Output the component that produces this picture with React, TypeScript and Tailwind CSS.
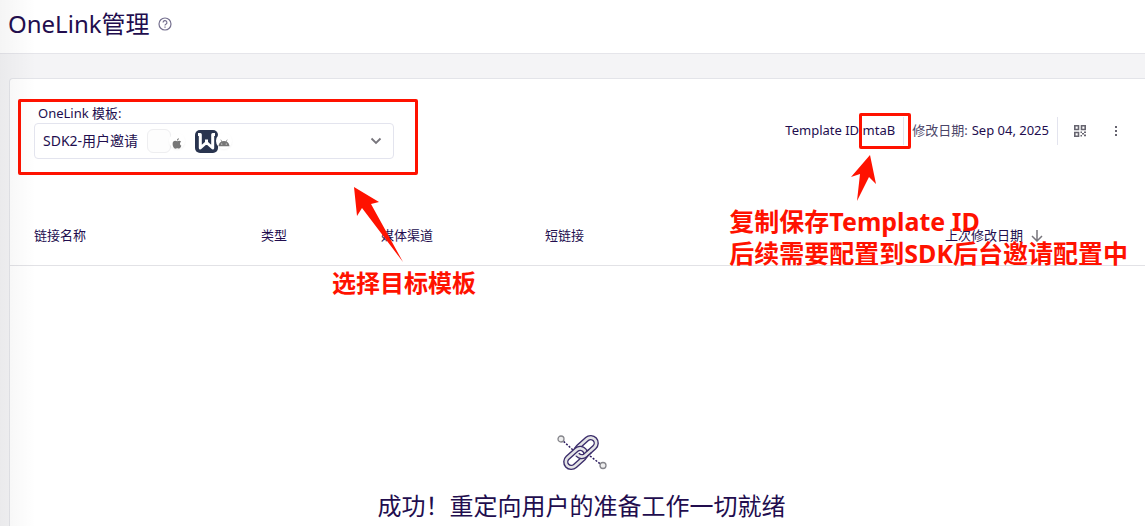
import { useState } from "react";

const RED = "#ff1200";

function HelpIcon() {
  return (
    <svg width="14" height="14" viewBox="0 0 14 14" fill="none" stroke="#75708f" strokeWidth="1.2">
      <circle cx="7" cy="7" r="6" />
      <path d="M5.1 5.6a1.9 1.9 0 1 1 2.8 1.6c-.6.35-.9.6-.9 1.3" />
      <path d="M7 9.6v1.2" />
    </svg>
  );
}

function AppleIcon() {
  return (
    <svg width="10" height="11" viewBox="0 0 20 22" fill="#777">
      <path d="M14.2 5.6c-1.6 0-2.7 1-3.8 1-1.1 0-2.3-.9-3.8-.9C3.5 5.7 1.2 8 1.2 12c0 4.5 2.8 9.4 5.3 9.4 1.3 0 2-.8 3.7-.8s2.3.8 3.7.8c2 0 3.9-3.3 4.8-5.8-3.6-1.6-3.7-6.6-.4-8.2-1-1.2-2.5-1.8-4.1-1.8z" />
      <path d="M13.8.5c.2 2.4-1.7 4.7-4 4.7C9.6 2.9 11.5.8 13.8.5z" />
    </svg>
  );
}

function AndroidIcon() {
  return (
    <svg width="12" height="8" viewBox="0 0 24 15" fill="#757575">
      <path d="M1 14C1.3 9.5 3.6 6.2 7 4.5L4.8 1l1-.6 2.4 3.5a12 12 0 0 1 7.6 0L18.2.4l1 .6L17 4.5c3.4 1.7 5.7 5 6 9.5z" />
      <circle cx="7.5" cy="9.5" r="1.2" fill="#fff" />
      <circle cx="16.5" cy="9.5" r="1.2" fill="#fff" />
    </svg>
  );
}

function AppLogo() {
  return (
    <svg className="block" width="23" height="23" viewBox="0 0 23 23">
      <rect width="23" height="23" rx="5" fill="#29344f" />
      <path
        d="M3 4.500h2.300v13.500l6.200-5.500 6.200 5.500V4.500H20M11.500 9.500v3"
        fill="none"
        stroke="#fff"
        strokeWidth="3"
        strokeLinejoin="round"
      />
    </svg>
  );
}

function QrIcon() {
  return (
    <svg width="12" height="12" viewBox="0 0 12 12" fill="none" stroke="#66646f" strokeWidth="1.6">
      <path d="M.8.8h3.7v3.7H.8zM7.5.8h3.7v3.7H7.5zM.8 7.5h3.7v3.7H.8z" />
      <path d="M6.5 7.2H8M8 8.8h2M10 7.2h2M6.5 10.8H8M10 10.4h2" />
    </svg>
  );
}

function LinkIllustration() {
  return (
    <svg width="52" height="40" viewBox="0 0 52 40" fill="none">
      <path d="M5 7l12 11M34 24l13 10" stroke="#2a1a5e" strokeWidth="1.5" strokeDasharray="2 1.5" />
      <circle cx="5" cy="7" r="3" fill="#eee" stroke="#85858b" strokeWidth="1.3" />
      <circle cx="47" cy="33.5" r="3" fill="#eee" stroke="#85858b" strokeWidth="1.3" />
      <g transform="rotate(-42 25 20.5)" strokeLinecap="round">
        <rect x="19" y="12.5" width="27" height="15" rx="7.5" stroke="#3b2d6b" strokeWidth="1.4" fill="#e4e4e6" />
        <rect x="23" y="16.5" width="19" height="7" rx="3.5" stroke="#3b2d6b" strokeWidth="1.4" fill="#fff" />
        <rect x="4" y="13.5" width="27" height="15" rx="7.5" stroke="#3b2d6b" strokeWidth="1.4" fill="#e4e4e6" />
        <rect x="8" y="17.5" width="19" height="7" rx="3.5" stroke="#3b2d6b" strokeWidth="1.4" fill="#fff" />
        <path d="M21 20v1a5 5 0 0 0 5 4.5h5" stroke="#e4e4e6" strokeWidth="3" />
        <path d="M19 20a7.5 7.5 0 0 0 7.5 7.5h6M23 20a3.5 3.5 0 0 0 3.5 3.5h6" stroke="#3b2d6b" strokeWidth="1.4" />
      </g>
    </svg>
  );
}

function TemplateSelect() {
  const [template, setTemplate] = useState("sdk2");

  return (
    <div className="relative w-[360px]">
      <label htmlFor="template" className="block pl-1 text-[13px] leading-5">
        OneLink 模板:
      </label>
      <div className="relative">
        <select
          id="template"
          value={template}
          onChange={(e) => setTemplate(e.target.value)}
          className="block h-9 w-full appearance-none rounded border border-[#e3e4ee] bg-white px-2 pb-0.5 text-[14px] outline-none"
        >
          <option value="sdk2">SDK2-用户邀请</option>
        </select>
        <div className="pointer-events-none absolute inset-y-0 right-3 left-[113px] flex items-center">
          <span className="h-6 w-6 rounded-md border border-[#eeeef0] bg-[#fdfdfd]" />
          <span className="-ml-0.5 flex h-4 w-4 items-center justify-center rounded-full bg-white pt-1 shadow-xs">
            <AppleIcon />
          </span>
          <span className="ml-2.5">
            <AppLogo />
          </span>
          <span className="-ml-0.5 flex h-4 w-4 items-center justify-center rounded-full bg-white pt-1 shadow-xs">
            <AndroidIcon />
          </span>
          <svg className="ml-auto" width="12" height="8" viewBox="0 0 12 8" fill="none" stroke="#77757c" strokeWidth="1.8">
            <path d="M1.5 1.5L6 6l4.5-4.5" />
          </svg>
        </div>
      </div>
      <div className="pointer-events-none absolute -top-1 -right-6 -bottom-4 -left-4 rounded-xs border-3 border-[#ff1200]" />
      <svg className="absolute top-[84px] left-80 z-10" width="49" height="76" viewBox="0 0 49 76" fill={RED}>
        <path d="M0 0L25 15L17 17L49 75L8 21L3 29Z" />
      </svg>
      <p className="absolute top-[164px] left-[298px] z-10 text-2xl leading-8 font-bold whitespace-nowrap text-[#ff1200]">
        选择目标模板
      </p>
    </div>
  );
}

function TemplateDetails() {
  return (
    <div className="relative flex items-center text-[13px] whitespace-nowrap">
      <span>Template ID:</span>
      <span className="relative flex h-7 items-center border-r border-[#e3e4ee] pr-2">
        mtaB
        <span className="pointer-events-none absolute -inset-y-1 -right-2 -left-1 rounded-xs border-3 border-[#ff1200]" />
        <svg className="absolute top-[38px] -left-3 z-10" width="25" height="46" viewBox="0 0 25 46" fill={RED}>
          <path d="M19 0L25 29L18 22L6 46L9 19L0 22Z" />
        </svg>
      </span>
      <span className="flex h-7 items-center border-r border-[#e3e4ee] px-2">
        <span className="mr-1 text-[#4b4568]">修改日期:</span>Sep 04, 2025
      </span>
      <button type="button" aria-label="QR" className="ml-4 flex h-7 items-center">
        <QrIcon />
      </button>
      <button type="button" aria-label="More" className="ml-6 flex h-7 w-3 items-center justify-center">
        <svg width="4" height="12" viewBox="0 0 4 12" fill="#66646f">
          <path d="M1 1h2v2H1zM1 5h2v2H1zM1 9h2v2H1z" />
        </svg>
      </button>
      <p className="absolute top-[102px] -right-1.5 z-10 text-[25px] leading-8 font-bold text-[#ff1200]">
        复制保存Template ID
        <br />
        后续需要配置到SDK后台邀请配置中
      </p>
    </div>
  );
}

export default function App() {
  return (
    <div className="relative flex h-screen flex-col overflow-hidden bg-[#f4f4f6] font-['Noto_Sans','Noto_Sans_CJK_SC',sans-serif] text-[#220d4e]">
      <header className="flex items-center gap-2 border-b border-[#e5e5ea] bg-white px-2 pt-2 pb-[13px]">
        <h1 className="text-2xl leading-8">OneLink管理</h1>
        <button type="button" aria-label="Help">
          <HelpIcon />
        </button>
      </header>

      <main className="mt-6 ml-[9px] flex-1 rounded-tl border-t border-l border-[#e3e4e9] bg-white">
        <div className="flex justify-between pt-6 pr-[23px] pl-6">
          <TemplateSelect />
          <TemplateDetails />
        </div>

        <table className="mt-12 w-full table-fixed border-collapse">
          <thead>
            <tr className="h-[58px] border-b border-[#e2e2e6] text-left text-[13px]">
              <th className="w-[227px] pl-6 font-normal">链接名称</th>
              <th className="w-[120px] pl-6 font-normal">类型</th>
              <th className="w-[164px] pl-6 font-normal">媒体渠道</th>
              <th className="pl-6 font-normal">短链接</th>
              <th className="w-[224px] pl-6 font-normal">
                <button type="button" className="flex items-center gap-2">
                  上次修改日期
                  <svg width="12" height="12" viewBox="0 0 12 12" fill="none" stroke="#77757c" strokeWidth="1.5">
                    <path d="M6 0v10.5M1 6l5 5 5-5" />
                  </svg>
                </button>
              </th>
            </tr>
          </thead>
        </table>

        <section className="flex flex-col items-center pt-[166px] pl-2">
          <LinkIllustration />
          <h2 className="mt-4 text-2xl leading-9 whitespace-nowrap">成功！重定向用户的准备工作一切就绪</h2>
        </section>
      </main>

      <div className="pointer-events-none absolute inset-y-0 left-0 w-9 bg-linear-to-r from-black/4 to-transparent" />
    </div>
  );
}
